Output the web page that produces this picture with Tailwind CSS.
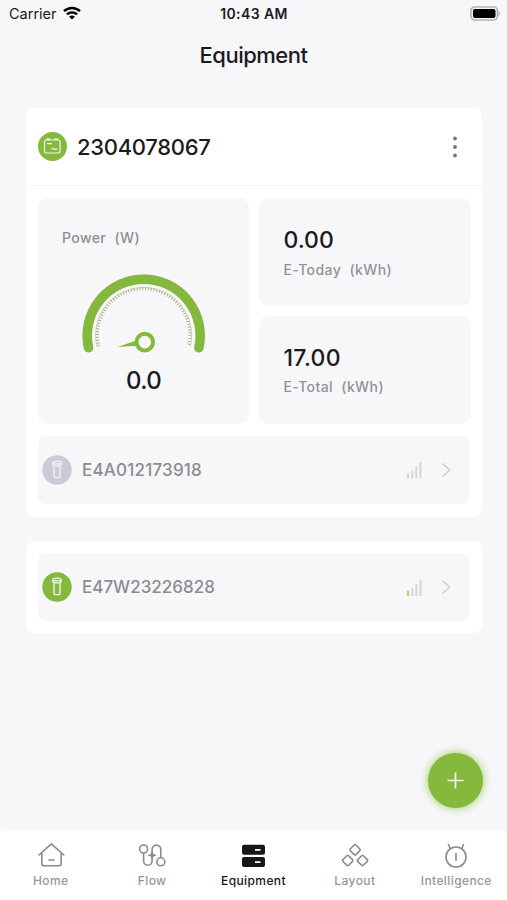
<!DOCTYPE html>
<html lang="en">
<head>
<meta charset="utf-8">
<meta name="viewport" content="width=device-width, initial-scale=1">
<title>Equipment</title>
<script src="https://cdn.jsdelivr.net/npm/@tailwindcss/browser@4"></script>
</head>
<body class="bg-[#f7f7fa]">
<div class="relative flex h-[900px] w-[507px] flex-col overflow-hidden bg-[#f7f7fa] font-['Inter','Liberation_Sans',sans-serif] text-[#1b1b1f]">
  <!-- Status bar -->
  <header class="grid h-7 shrink-0 grid-cols-3 items-center pr-[6px] pl-[9px]">
    <div class="flex items-center gap-[6px]">
      <span class="text-[14.5px] leading-7">Carrier</span>
      <svg class="mb-[2px] h-[14px] w-[18px]" viewBox="0 0 18 14" fill="none" stroke="#000" stroke-width="2.5"><path d="M1 5.2C5.6.8 12.400.8 17 5.200"/><path d="M4 8.400c2.900-2.700 7.100-2.700 10 0"/><path d="M9 13.600l-2.900-2.900c1.700-1.500 4.100-1.500 5.800 0z" fill="#000" stroke="none"/></svg>
    </div>
    <span class="-ml-[2px] text-center text-[14px] leading-7 font-semibold tracking-[0.4px] whitespace-nowrap">10:43 AM</span>
    <svg class="mb-[2px] h-[15px] w-[31px] justify-self-end" viewBox="0 0 31 15"><rect x=".9" y="1" width="26.600" height="13" rx="4" fill="#f7f7fa" stroke="#b4b4b4" stroke-width="1.700"/><rect x="3" y="3" width="22.500" height="9" rx="2" fill="#000"/><path d="M28.500 4.800q3 2.700 0 5.400z" fill="#b4b4b4"/></svg>
  </header>
  <h1 class="h-[80px] shrink-0 text-center text-[22px] leading-[54px] font-medium tracking-[-0.5px]">Equipment</h1>

  <main class="flex grow flex-col gap-[24px] pr-[25px] pl-[26px]">
    <section class="h-[409px] rounded-[8px] bg-white">
      <div class="flex h-[78px] items-center border-b border-[#f6f6f8] pr-[23px] pl-[12px]">
        <svg class="size-[29px]" viewBox="0 0 29 29" fill="none" stroke="#f2faeb" stroke-width="1.200" stroke-linecap="round" stroke-linejoin="round"><circle cx="14.500" cy="14.500" r="14.500" fill="#84b93d" stroke="none"/><rect x="6.500" y="8" width="15.500" height="13" rx="1.800"/><path d="M9 7h2.500M17 7h2.500" stroke-width="1.500"/><path d="M9.500 11.700h4"/><path d="M13.600 16.900c1.600-1.600 2.900 1.400 5.200.2"/></svg>
        <span class="ml-[10px] grow text-[22px] leading-[28px] font-medium tracking-[-0.3px]">2304078067</span>
        <svg class="h-[24px] w-[8px]" viewBox="0 0 8 24" fill="#77777b"><circle cx="4" cy="3.500" r="1.900"/><circle cx="4" cy="12" r="1.900"/><circle cx="4" cy="20.500" r="1.900"/></svg>
      </div>
      <div class="grid grid-cols-[211px_212px] gap-[10px] px-[12px] pt-[12px]">
        <div class="flex h-[226px] flex-col items-center rounded-[10px] bg-[#f7f7fa]">
          <p class="w-full pt-[30px] pl-[24px] text-[14px] leading-[20px] font-medium tracking-[0.4px] whitespace-pre text-[#8d8d93]">Power  (W)</p>
          <svg class="mt-[22px] h-[84px] w-[126px]" viewBox="80.900 270.400 126 84" fill="none">
            <path d="M88.400 348.200A56.500 56.500 0 1 1 198.800 348.200" stroke="#84b93d" stroke-width="9.600" stroke-linecap="round"/>
            <path d="M96.800 347A48 48 0 1 1 190.200 347" stroke="#9bbd6c" stroke-width=".5"/>
            <path d="M98.600 346.600A46.300 46.300 0 1 1 188.400 346.600" stroke="#9bae84" stroke-width="3.200" stroke-dasharray=".9 1.950"/>
            <path d="M117.300 347.300L138 340.300L138 346.200Z" fill="#84b93d"/>
            <circle cx="144.700" cy="342.500" r="8.300" fill="#f7f7fa" stroke="#84b93d" stroke-width="4"/>
          </svg>
          <p class="mt-[13px] text-[24px] leading-[28px] font-medium tracking-[-0.6px]">0.0</p>
        </div>
        <div class="flex flex-col gap-[10px]">
          <div class="h-[108px] rounded-[10px] bg-[#f7f7fa] pt-[28px] pl-[24.500px]">
            <p class="text-[23px] leading-[28px] font-medium">0.00</p>
            <p class="mt-[6px] text-[14px] leading-[20px] font-medium tracking-[0.4px] whitespace-pre text-[#929298]">E-Today  (kWh)</p>
          </div>
          <div class="h-[108px] rounded-[10px] bg-[#f7f7fa] pt-[28px] pl-[24.500px]">
            <p class="text-[23px] leading-[28px] font-medium tracking-[0.3px]">17.00</p>
            <p class="mt-[5px] text-[14px] leading-[20px] font-medium tracking-[0.4px] whitespace-pre text-[#929298]">E-Total  (kWh)</p>
          </div>
        </div>
      </div>
      <div class="mx-[12px] mt-[12px] flex h-[68px] items-center rounded-[8px] bg-[#f7f7fa] pr-[18px] pl-[4px]">
        <svg class="size-[30px]" viewBox="0 0 30 30" fill="none" stroke="#f3f3f8" stroke-width="1.300" stroke-linejoin="round"><circle cx="15" cy="15" r="14.700" fill="#cbcbd6" stroke="none"/><path d="M10.800 7.300q4.200-2.200 8.400 0v2.300l-1.400 1.300h-5.600l-1.400-1.300zM12 10.900V21.500q0 1.200 1.200 1.200h3.600q1.200 0 1.200-1.200V10.900M11 8.900h8"/></svg>
        <span class="ml-[10px] grow text-[17px] leading-[24px] font-medium tracking-[0.2px] text-[#8c8c91]">E4A012173918</span>
        <svg class="h-[18px] w-[17px]" viewBox="0 0 17 18" fill="none" stroke="#d5d5da" stroke-width="2"><path d="M2 17.500v-5.500M6.300 17.500V9.500M10.300 17.500V5.500M14.500 17.500V1"/></svg>
        <svg class="ml-[18px] h-[16px] w-[11px]" viewBox="0 0 11 16" fill="none" stroke="#cdcdd2" stroke-width="1.400"><path d="M1.500 1.500l7.300 6.500-7.300 6.500"/></svg>
      </div>
    </section>
    <section class="h-[92px] rounded-[8px] bg-white p-[12px]">
      <div class="flex h-[68px] items-center rounded-[8px] bg-[#f7f7fa] pr-[18px] pl-[4px]">
        <svg class="size-[30px]" viewBox="0 0 30 30" fill="none" stroke="#f2faeb" stroke-width="1.300" stroke-linejoin="round"><circle cx="15" cy="15" r="14.700" fill="#84b93d" stroke="none"/><path d="M10.800 7.300q4.200-2.200 8.400 0v2.300l-1.400 1.300h-5.600l-1.400-1.300zM12 10.900V21.500q0 1.200 1.200 1.200h3.600q1.200 0 1.200-1.200V10.900M11 8.900h8"/></svg>
        <span class="ml-[10px] grow text-[17px] leading-[24px] font-medium tracking-[0px] text-[#8c8c91]">E47W23226828</span>
        <svg class="mt-[2px] h-[18px] w-[17px]" viewBox="0 0 17 18" fill="none" stroke="#d5d5da" stroke-width="2"><path d="M6.300 17V9M10.300 17V5M14.500 17V.500"/><path d="M2 17v-5.500" stroke="#b9cf7c" stroke-width="2.400"/></svg>
        <svg class="ml-[18px] h-[16px] w-[11px]" viewBox="0 0 11 16" fill="none" stroke="#cdcdd2" stroke-width="1.400"><path d="M1.500 1.500l7.300 6.500-7.300 6.500"/></svg>
      </div>
    </section>
  </main>

  <!-- Floating add button -->
  <button class="absolute top-[753px] left-[428px] flex size-[55px] items-center justify-center rounded-full bg-[#84b93d] shadow-[0_0_9px_1px_rgba(132,200,50,0.65)]">
    <svg class="size-[18px]" viewBox="0.5 0.5 18 18" stroke="#f4fbe9" stroke-width="1.700"><path d="M9 1v16M1 9h16"/></svg>
  </button>

  <nav class="grid h-[69px] shrink-0 grid-cols-5 bg-white text-[12px] leading-[16px] font-medium tracking-[0.4px] text-[#96969b] shadow-[0_-1px_4px_rgba(255,255,255,0.9)]">
    <a class="flex flex-col items-center pt-[10px]">
      <svg class="h-[28px] w-[30px]" viewBox="0 0 30 28" fill="none" stroke="#8a8a8f" stroke-width="1.600" stroke-linecap="round" stroke-linejoin="round"><path d="M3 14L15.300 2.800L27.800 14M5.800 12v10.500q0 2.200 2.200 2.200h15q2.200 0 2.200-2.200V12M13 19h5"/></svg>
      <span class="mt-[4px]">Home</span>
    </a>
    <a class="flex flex-col items-center pt-[10px]">
      <svg class="h-[28px] w-[30px]" viewBox="0 0 30 28" fill="none" stroke="#8a8a8f" stroke-width="1.600"><circle cx="6.600" cy="8" r="4"/><circle cx="23.800" cy="20.800" r="4"/><path d="M6.600 12v8a4.200 4.200 0 0 0 8.500 0V8.500a4.300 4.300 0 0 1 8.700 0v8.300"/><path d="M15.100 11.700l.7 1.800 1.800.7-1.800.7-.7 1.800-.7-1.800-1.800-.7 1.800-.7z" fill="#8a8a8f"/></svg>
      <span class="mt-[4px]">Flow</span>
    </a>
    <a class="flex flex-col items-center pt-[10px] text-[#17171a]">
      <svg class="h-[28px] w-[30px]" viewBox="0 0 30 28"><rect x="4" y="3.700" width="23" height="10" rx="2" fill="#17171a"/><rect x="4" y="16" width="23" height="10" rx="2" fill="#17171a"/><path d="M17 8.900h5.500M17 21.100h5.500" stroke="#fff" stroke-width="1.700"/></svg>
      <span class="mt-[4px]">Equipment</span>
    </a>
    <a class="flex flex-col items-center pt-[10px]">
      <svg class="h-[28px] w-[30px]" viewBox="0 0 30 28" fill="none" stroke="#8a8a8f" stroke-width="1.600"><rect x="11" y="4.800" width="8" height="8" rx="1.200" transform="rotate(45 15 8.800)"/><rect x="3.700" y="15.500" width="8" height="8" rx="1.200" transform="rotate(45 7.700 19.500)"/><rect x="18.500" y="15.500" width="8" height="8" rx="1.200" transform="rotate(45 22.500 19.500)"/></svg>
      <span class="mt-[4px]">Layout</span>
    </a>
    <a class="flex flex-col items-center pt-[10px]">
      <svg class="h-[28px] w-[30px]" viewBox="0 0 30 28" fill="none" stroke="#8a8a8f" stroke-width="1.600" stroke-linecap="round"><circle cx="15" cy="16" r="10"/><path d="M15 12.500v7M7.500 3.500l1.700 4.200M22.500 3.500l-1.700 4.200"/></svg>
      <span class="mt-[4px]">Intelligence</span>
    </a>
  </nav>
</div>
</body>
</html>
